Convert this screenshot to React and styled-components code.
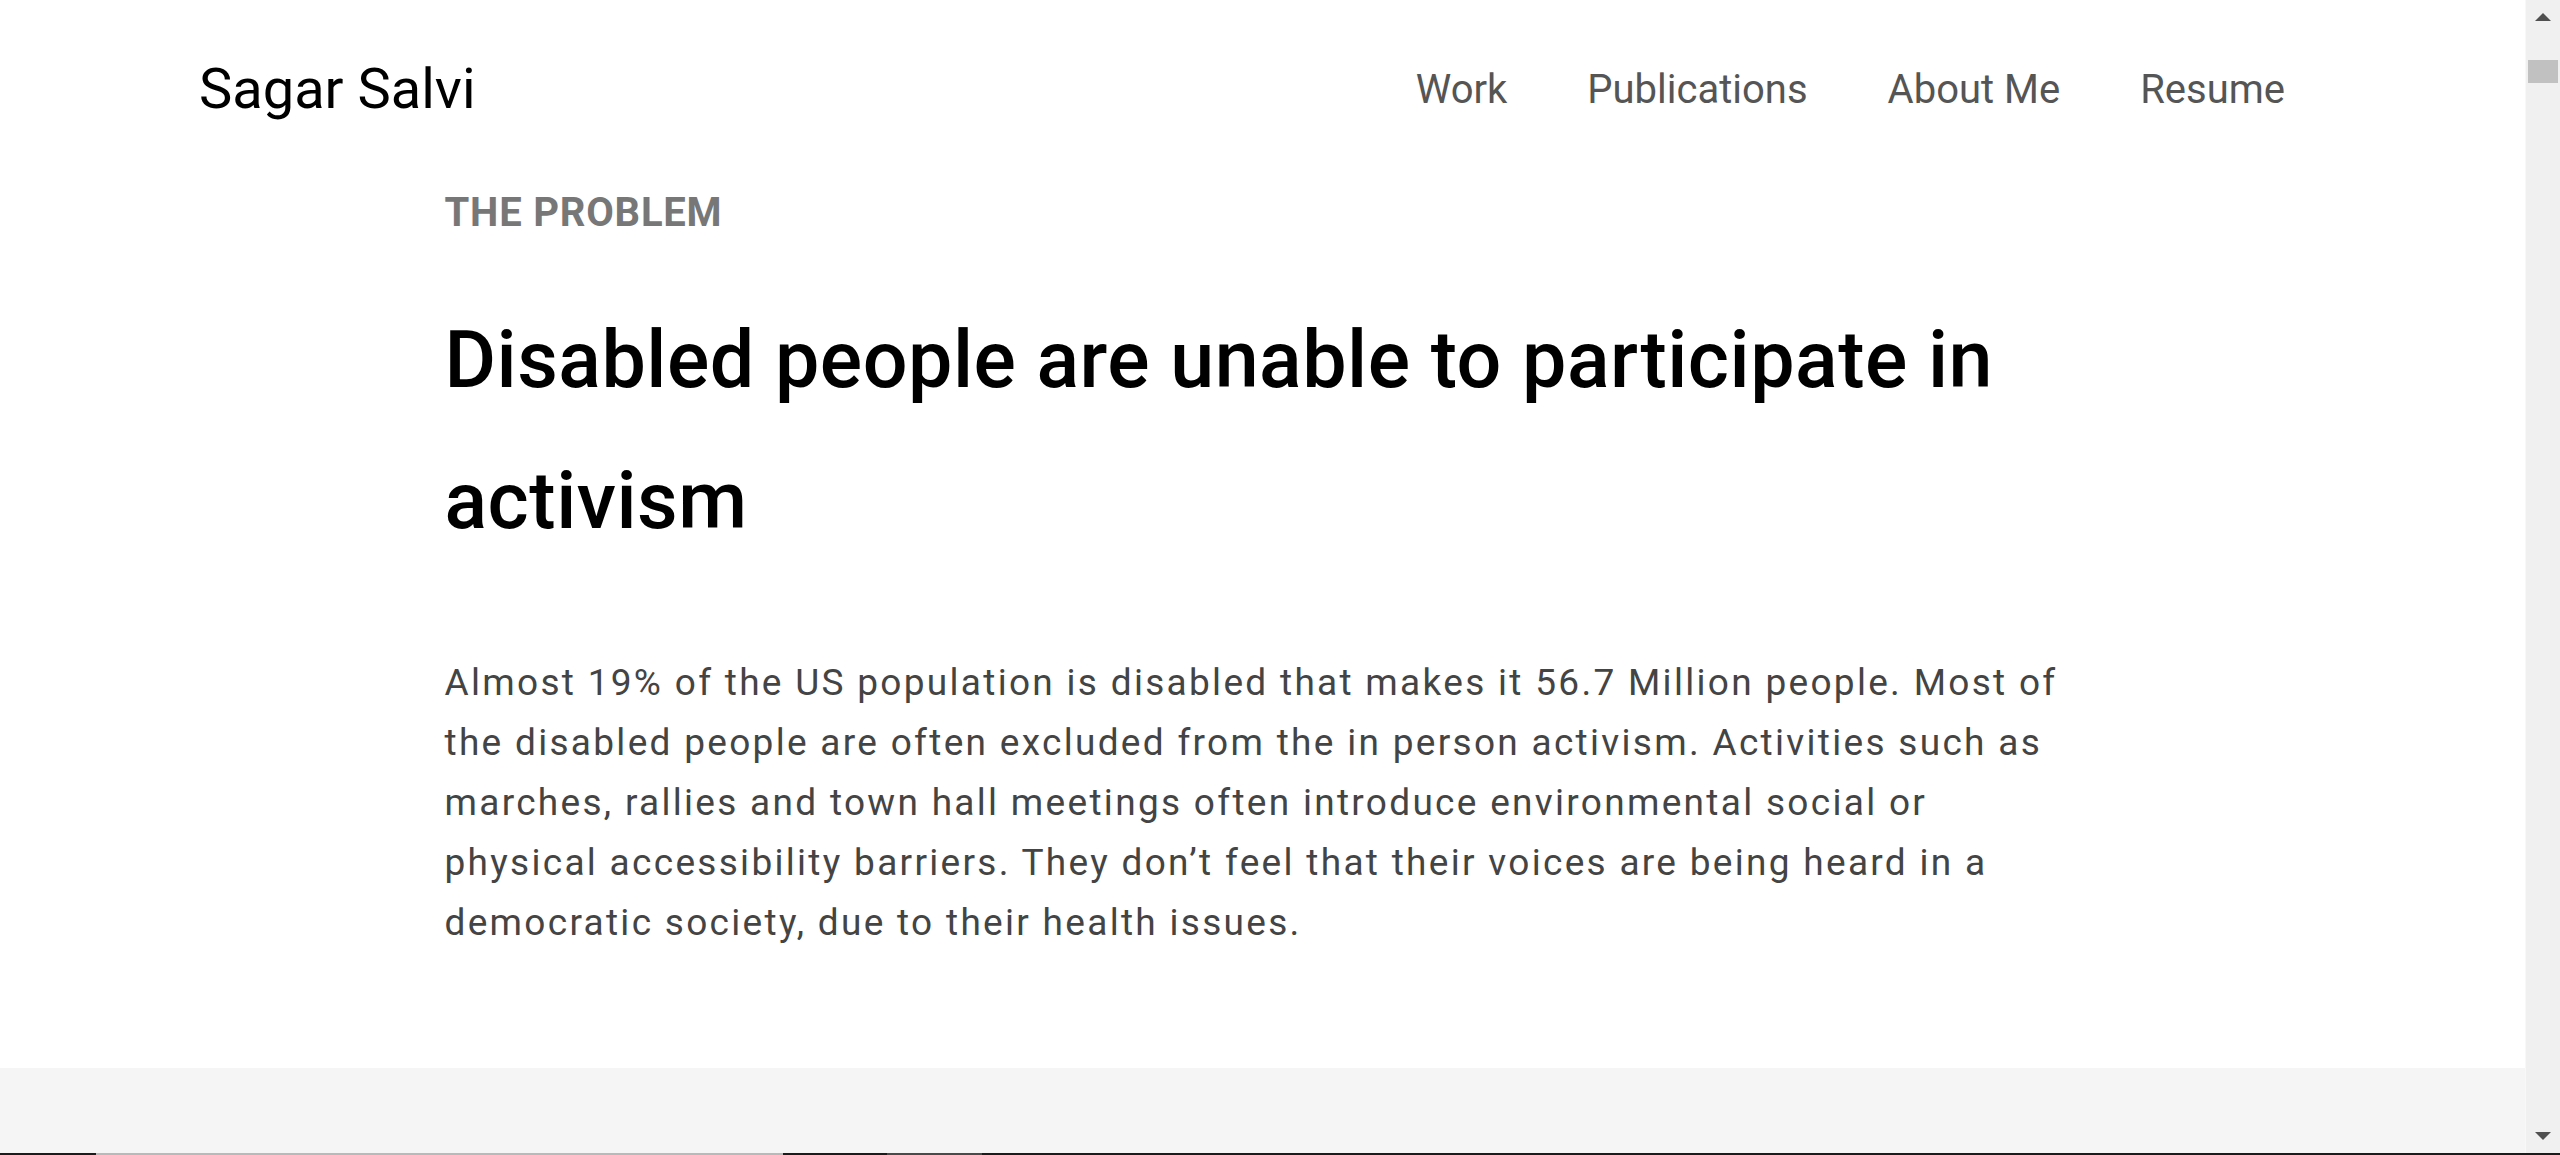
import React from "react";
import styled, { createGlobalStyle } from "styled-components";

const GlobalStyle = createGlobalStyle`
  html, body {
    margin: 0;
    padding: 0;
    overflow: hidden;
    background: #ffffff;
    font-family: Roboto, "Liberation Sans", sans-serif;
  }
  * {
    box-sizing: border-box;
  }
`;

const navLinks = ["Work", "Publications", "About Me", "Resume"];

const paragraph =
  "Almost 19% of the US population is disabled that makes it 56.7 Million people. Most of the disabled people are often excluded from the in person activism. Activities such as marches, rallies and town hall meetings often introduce environmental social or physical accessibility barriers. They don\u2019t feel that their voices are being heard in a democratic society, due to their health issues.";

const App = () => {
  return (
    <Frame>
      <GlobalStyle />
      <Viewport>
        <Page>
          <Header>
            <Logo>Sagar Salvi</Logo>
            <Nav>
              {navLinks.map(link => (
                <NavLink key={link} href="#">
                  {link}
                </NavLink>
              ))}
            </Nav>
          </Header>
          <Section>
            <Column>
              <Eyebrow>THE PROBLEM</Eyebrow>
              <Heading>
                Disabled people are unable to participate in activism
              </Heading>
              <Body>{paragraph}</Body>
            </Column>
          </Section>
          <GreySection />
        </Page>
        <ScrollTrack>
          <Arrow up />
          <TrackBody>
            <Thumb />
          </TrackBody>
          <Arrow />
        </ScrollTrack>
      </Viewport>
      <Taskbar />
    </Frame>
  );
};

const Frame = styled.div`
  display: flex;
  flex-direction: column;
  width: 100vw;
  height: 1155px;
`;

const Viewport = styled.div`
  display: flex;
  flex: 1;
  min-height: 0;
`;

const Page = styled.div`
  flex: 1;
  display: flex;
  flex-direction: column;
  overflow: hidden;
  background: #ffffff;
  border-right: 1px solid #f8f8f8;
`;

const Header = styled.header`
  display: flex;
  align-items: center;
  justify-content: space-between;
  padding: 56px 200px 0 199px;
`;

const Logo = styled.a`
  font-size: 56px;
  font-weight: 400;
  color: #000000;
  text-decoration: none;
`;

const Nav = styled.nav`
  display: flex;
  align-items: center;
`;

const NavLink = styled.a`
  padding: 0 40px;
  font-size: 40px;
  font-weight: 400;
  color: #555555;
  text-decoration: none;
`;

const Section = styled.section`
  padding: 67px 0 115px;
`;

const Column = styled.div`
  max-width: 1640px;
  margin: 0 auto;
  padding: 0 12px 0 2px;
`;

const Eyebrow = styled.div`
  font-size: 40px;
  font-weight: 700;
  letter-spacing: 0.8px;
  color: #777777;
`;

const Heading = styled.h2`
  margin: 54px 0 0;
  font-size: 79px;
  font-weight: 500;
  letter-spacing: 0.5px;
  line-height: 141px;
  color: #000000;
`;

const Body = styled.p`
  margin: 81px 0 0;
  font-size: 37px;
  letter-spacing: 2.3px;
  line-height: 60px;
  color: #444444;
`;

const GreySection = styled.div`
  flex: 1;
  background: #f5f5f5;
`;

const ScrollTrack = styled.div`
  width: 34px;
  display: flex;
  flex-direction: column;
  align-items: center;
  background: #f0f0f0;
`;

const Arrow = styled.div`
  width: 34px;
  height: 34px;
  display: flex;
  align-items: center;
  justify-content: center;
  &::before {
    content: "";
    width: 0;
    height: 0;
    border-left: 8px solid transparent;
    border-right: 8px solid transparent;
    ${props =>
      props.up
        ? "border-bottom: 8px solid #505050;"
        : "border-top: 8px solid #505050;"}
  }
`;

const TrackBody = styled.div`
  flex: 1;
  width: 100%;
  padding: 26px 2px 0;
`;

const Thumb = styled.div`
  height: 23px;
  background: #c1c1c1;
`;

const Taskbar = styled.div`
  height: 2px;
  background: linear-gradient(
    to right,
    #1b1b1b 0 96px,
    #b9b9b9 96px 783px,
    #1b1b1b 783px 887px,
    #4a4a4a 887px 982px,
    #1b1b1b 982px
  );
`;

export default App;
